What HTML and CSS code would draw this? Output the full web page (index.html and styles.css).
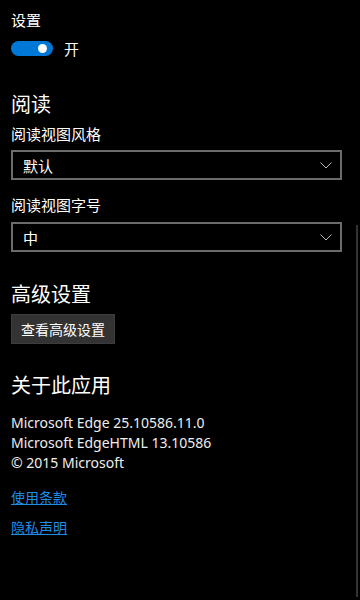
FILE: index.html
```html
<!DOCTYPE html>
<html lang="zh-CN">
  <head>
    <meta charset="UTF-8" />
    <meta name="viewport" content="width=device-width, initial-scale=1.0" />
    <title>设置</title>
    <link rel="stylesheet" href="styles.css">
  </head>
  <body>
    <div class="page">
      <p class="label top-label">设置</p>
      <div class="toggle-row">
        <span class="toggle"><span class="knob"></span></span>
        <span class="toggle-text">开</span>
      </div>

      <h2 class="section read">阅读</h2>
      <p class="label style-label">阅读视图风格</p>
      <div class="select">
        <span>默认</span>
        <svg class="chevron" width="12" height="7" viewBox="0 0 12 7"><path d="M0.5 0.5 L6 6 L11.5 0.5" fill="none" stroke="#bbb" stroke-width="1"/></svg>
      </div>
      <p class="label size-label">阅读视图字号</p>
      <div class="select select-size">
        <span>中</span>
        <svg class="chevron" width="12" height="7" viewBox="0 0 12 7"><path d="M0.5 0.5 L6 6 L11.5 0.5" fill="none" stroke="#bbb" stroke-width="1"/></svg>
      </div>

      <h2 class="section advanced">高级设置</h2>
      <button class="btn">查看高级设置</button>

      <h2 class="section about">关于此应用</h2>
      <div class="version">
        <p>Microsoft Edge 25.10586.11.0</p>
        <p>Microsoft EdgeHTML 13.10586</p>
        <p>© 2015 Microsoft</p>
      </div>

      <a class="link first" href="#">使用条款</a>
      <a class="link" href="#">隐私声明</a>
    </div>
    <div class="scrollbar"></div>
  </body>
</html>
```

FILE: styles.css
```css
body {
    margin: 0;
    background-color: #000;
    color: #fff;
    font-family: "Noto Sans", "Noto Sans CJK SC", sans-serif;
    height: 600px;
    overflow: hidden;
}
p {
    margin: 0;
}
.page {
    padding-left: 11px;
    display: flex;
    flex-direction: column;
    align-items: flex-start;
}
.label {
    font-size: 15px;
    line-height: 20px;
}
.top-label {
    margin-top: 10px;
}
.toggle-row {
    margin-top: 10px;
    display: flex;
    align-items: center;
    height: 16px;
}
.toggle {
    width: 42px;
    height: 15px;
    border-radius: 8px;
    background-color: #0078d7;
    position: relative;
}
.knob {
    position: absolute;
    right: 6px;
    top: 3px;
    width: 9px;
    height: 9px;
    border-radius: 50%;
    background-color: #fff;
}
.toggle-text {
    margin-left: 11px;
    font-size: 15px;
}
.section {
    font-size: 20px;
    font-weight: normal;
    line-height: 28px;
    margin: 0;
}
.read {
    margin-top: 35px;
}
.style-label {
    margin-top: 5px;
}
.select {
    margin-top: 6px;
    box-sizing: border-box;
    width: 331px;
    height: 30px;
    border: 2px solid #6b6b6b;
    display: flex;
    align-items: center;
    justify-content: space-between;
    padding: 0 8px 0 10px;
    font-size: 15px;
}
.size-label {
    margin-top: 15px;
}
.select-size {
    margin-top: 7px;
}
.advanced {
    margin-top: 29px;
}
.btn {
    margin-top: 5px;
    height: 30px;
    padding: 0 9px;
    background-color: #333;
    border: 1px solid #3d3d3d;
    color: #fff;
    font-family: "Noto Sans CJK SC", sans-serif;
    font-size: 14px;
}
.about {
    margin-top: 28px;
}
.version {
    margin-top: 13px;
    font-size: 14px;
    line-height: 20px;
    color: #eee;
}
.link {
    font-size: 14px;
    line-height: 20px;
    color: #1f8ce6;
    margin-top: 10px;
}
.link.first {
    margin-top: 15px;
}
.scrollbar {
    position: absolute;
    left: 356px;
    top: 225px;
    width: 2px;
    height: 372px;
    background-color: #333;
}
```
